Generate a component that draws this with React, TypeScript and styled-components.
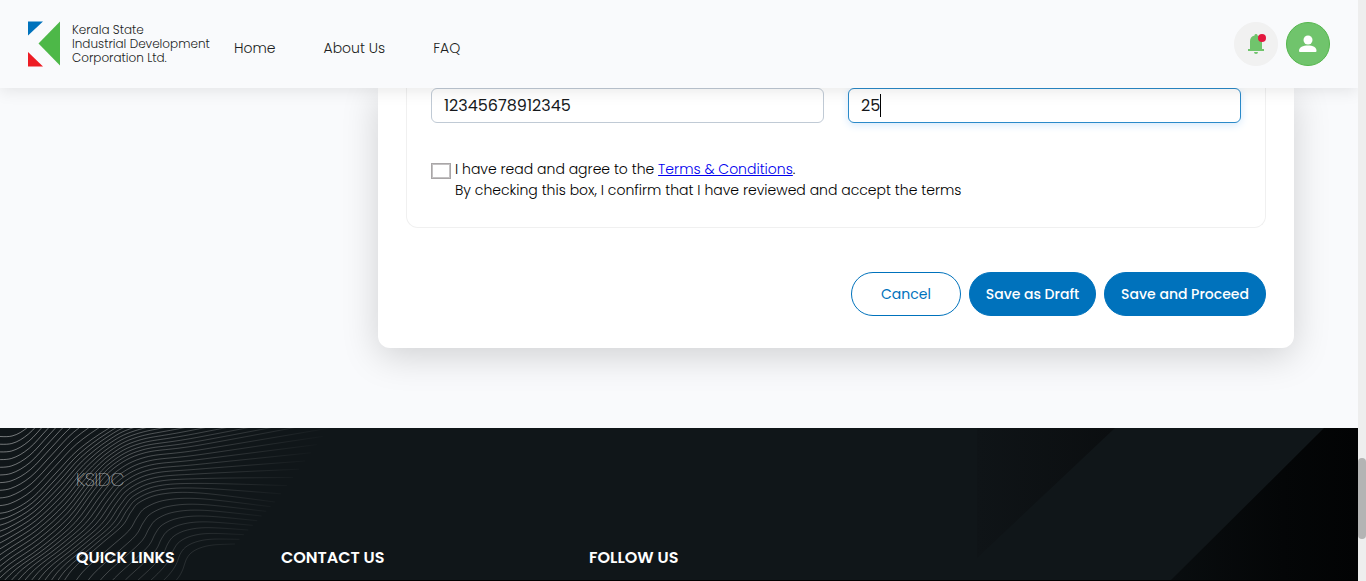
import React from "react";
import styled, { createGlobalStyle } from "styled-components";

const GlobalStyle = createGlobalStyle`
  *, *::before, *::after { box-sizing: border-box; }
  body {
    margin: 0;
    background: #f9fafc;
    color: #212529;
    font-family: Poppins, Inter, "Open Sans", sans-serif;
    font-size: 14px;
    line-height: 21px;
  }
  button, input { font: inherit; }
`;

const Shell = styled.div`
  display: grid;
  grid-template-columns: minmax(0, 1fr) 8px;
  min-height: 100vh;
`;

const Page = styled.div`
  display: flex;
  flex-direction: column;
`;

const ScrollRail = styled.div`
  position: relative;
  z-index: 3;
  background: #eeeeee;
  padding-top: 458px;
`;

const ScrollThumb = styled.div`
  height: 81px;
  border-radius: 4px;
  background: #b4b4b4;
`;

const Header = styled.header`
  position: relative;
  z-index: 2;
  display: flex;
  align-items: center;
  height: 88px;
  padding: 0 28px;
  background: #f9fafc;
  box-shadow: 0 2px 16px rgba(0, 0, 0, 0.1);
`;

const Brand = styled.a`
  display: flex;
  align-items: center;
  gap: 12px;
  width: 206px;
  color: #1c1e24;
  font-size: 12px;
  font-weight: 300;
  line-height: 14px;
  text-decoration: none;
  white-space: nowrap;
`;

const Nav = styled.nav`
  display: flex;
  flex: 1;
  gap: 48px;
  padding-top: 8px;
`;

const NavLink = styled.a`
  color: #1c1e22;
  font-weight: 300;
  text-decoration: none;
`;

const Actions = styled.div`
  display: flex;
  gap: 8px;
`;

const RoundButton = styled.button<{ $filled?: boolean }>`
  position: relative;
  display: grid;
  place-items: center;
  width: 44px;
  height: 44px;
  padding: 0;
  border: 1px solid ${(p) => (p.$filled ? "#54b64c" : "#f1f1f1")};
  border-radius: 50%;
  background: ${(p) => (p.$filled ? "#70c46c" : "#f1f1f1")};
`;

const AlertDot = styled.span`
  position: absolute;
  top: 11px;
  right: 11px;
  width: 8px;
  height: 8px;
  border-radius: 50%;
  background: #e3173e;
`;

const Main = styled.main`
  padding: 0 64px 80px 378px;
`;

const Card = styled.form`
  padding: 0 28px 32px;
  border-radius: 0 0 12px 12px;
  background: #ffffff;
  box-shadow: 0 8px 36px rgba(0, 0, 0, 0.17);
`;

const Section = styled.section`
  padding: 0 24px 26px;
  border: 1px solid #f0f0f0;
  border-top: 0;
  border-radius: 0 0 12px 12px;
`;

const Fields = styled.div`
  display: grid;
  grid-template-columns: 1fr 1fr;
  gap: 24px;
`;

const Field = styled.div`
  position: relative;
`;

const TextInput = styled.input<{ $active?: boolean }>`
  display: block;
  width: 100%;
  height: 35px;
  padding: 0 12px;
  border: 1px solid ${(p) => (p.$active ? "#2a8ac9" : "#c0cad5")};
  border-radius: 6px;
  outline: none;
  background: #ffffff;
  box-shadow: ${(p) => (p.$active ? "0 2px 8px #d4e8fb" : "none")};
  color: #16191c;
  font-size: 16px;
`;

const Caret = styled.span`
  position: absolute;
  top: 6px;
  left: 32px;
  width: 1px;
  height: 23px;
  background: #000000;
`;

const Agreement = styled.div`
  display: flex;
  align-items: flex-start;
  gap: 4px;
  padding-top: 36px;
  color: #000000;
  font-weight: 300;
`;

const CheckBox = styled.input`
  appearance: none;
  flex: none;
  width: 20px;
  height: 16px;
  margin: 4px 0 0;
  border: 1px solid #a9a6a7;
  background: #ffffff;
  box-shadow: inset 0 0 0 1px #c4c2c3;
`;

const TermsLink = styled.a`
  color: #0000ee;
`;

const ButtonRow = styled.div`
  display: flex;
  justify-content: flex-end;
  gap: 8px;
  padding-top: 44px;
`;

const PillButton = styled.button<{ $width: number; $outline?: boolean }>`
  width: ${(p) => p.$width}px;
  height: 44px;
  padding: 0;
  border: 1px solid #0072bc;
  border-radius: 22px;
  background: ${(p) => (p.$outline ? "#ffffff" : "#0072bc")};
  color: ${(p) => (p.$outline ? "#0072bc" : "#ffffff")};
  font-weight: ${(p) => (p.$outline ? 400 : 500)};
  white-space: nowrap;
`;

const Footer = styled.footer`
  position: relative;
  flex: 1;
  overflow: hidden;
  padding: 40px 76px 10px;
  border-bottom: 1px solid #000000;
  background: #101619;
  color: #ffffff;
`;

const Backdrop = styled.svg<{ $side: "left" | "right" }>`
  position: absolute;
  top: 0;
  ${(p) => p.$side}: 0;
`;

const FooterContent = styled.div`
  position: relative;
`;

const FooterBrand = styled.div`
  font-size: 18px;
  font-weight: 200;
  line-height: 24px;
`;

const FooterColumns = styled.div`
  display: grid;
  grid-template-columns: 205px 308px 1fr;
  padding-top: 54px;
`;

const FooterHeading = styled.h2`
  margin: 0;
  font-size: 16px;
  font-weight: 600;
  line-height: 24px;
`;

type Point = [number, number];

const keyWaves: { at: number; points: Point[] }[] = [
  { at: 0, points: [[-8, 8], [12, 8], [28, -1], [44, -18], [64, -38], [90, -54], [120, -66], [160, -78], [340, -130]] },
  { at: 10, points: [[-8, 86], [10, 83], [32, 70], [56, 45], [78, 22], [106, 2], [130, -10], [180, -24], [340, -60]] },
  { at: 21, points: [[-10, 160], [10, 141], [40, 120], [70, 94], [94, 62], [114, 40], [144, 25], [200, 17], [335, -8]] },
  { at: 31, points: [[54, 170], [72, 142], [100, 117], [122, 98], [131, 84], [140, 74], [162, 66], [200, 65], [275, 74]] },
  { at: 40, points: [[146, 176], [168, 160], [178, 150], [183, 141], [186, 132], [191, 125], [200, 120], [213, 117], [235, 116]] },
];

function waveAt(i: number): Point[] {
  let k = 0;
  while (k < keyWaves.length - 2 && i > keyWaves[k + 1].at) k += 1;
  const a = keyWaves[k];
  const b = keyWaves[k + 1];
  const t = (i - a.at) / (b.at - a.at);
  return a.points.map(([x, y], n): Point => [x + (b.points[n][0] - x) * t, y + (b.points[n][1] - y) * t]);
}

function smoothPath(p: Point[]): string {
  let d = `M${p[0][0]} ${p[0][1]}`;
  for (let i = 0; i < p.length - 1; i += 1) {
    const before = p[Math.max(i - 1, 0)];
    const from = p[i];
    const to = p[i + 1];
    const after = p[Math.min(i + 2, p.length - 1)];
    d += `C${from[0] + (to[0] - before[0]) / 6} ${from[1] + (to[1] - before[1]) / 6} ${to[0] - (after[0] - from[0]) / 6} ${to[1] - (after[1] - from[1]) / 6} ${to[0]} ${to[1]}`;
  }
  return d;
}

const waves = Array.from({ length: 41 }, (_, i) => smoothPath(waveAt(i)));

const Logo = () => (
  <svg width="32" height="46" viewBox="0 0 32 46" aria-hidden="true">
    <path d="M0 0.500H15L0 14.500Z" fill="#0072bc" />
    <path d="M32 0.500V44.500L10.500 22.500Z" fill="#4db848" />
    <path d="M0 31L15 45.500H0Z" fill="#ed1c24" />
  </svg>
);

const Bell = () => (
  <svg width="16" height="20" viewBox="0 0 16 20" fill="#70c46c" aria-hidden="true">
    <path d="M8 0a1.500 1.500 0 0 1 1.500 1.600A6 6 0 0 1 14 7.500V15h2v2H0v-2h2V7.500A6 6 0 0 1 6.500 1.600 1.500 1.500 0 0 1 8 0ZM6 18h4a2 2 0 0 1-4 0Z" />
  </svg>
);

const Person = () => (
  <svg width="18" height="18" viewBox="0 0 18 18" fill="#ffffff" aria-hidden="true">
    <circle cx="9" cy="5" r="4.500" />
    <path d="M1 17a1 1 0 0 1-1-1c0-4 4-5.500 9-5.500s8.500 1.500 8.500 5.500a1 1 0 0 1-1 1Z" />
  </svg>
);

export default function App() {
  return (
    <>
      <GlobalStyle />
      <Shell>
        <Page>
          <Header>
            <Brand href="#">
              <Logo />
              <span>
                Kerala State
                <br />
                Industrial Development
                <br />
                Corporation Ltd.
              </span>
            </Brand>
            <Nav>
              <NavLink href="#">Home</NavLink>
              <NavLink href="#">About Us</NavLink>
              <NavLink href="#">FAQ</NavLink>
            </Nav>
            <Actions>
              <RoundButton type="button" aria-label="Notifications">
                <Bell />
                <AlertDot />
              </RoundButton>
              <RoundButton type="button" aria-label="Profile" $filled>
                <Person />
              </RoundButton>
            </Actions>
          </Header>
          <Main>
            <Card>
              <Section>
                <Fields>
                  <Field>
                    <TextInput aria-label="Account number" defaultValue="12345678912345" />
                  </Field>
                  <Field>
                    <TextInput aria-label="Amount" defaultValue="25" $active />
                    <Caret />
                  </Field>
                </Fields>
                <Agreement>
                  <CheckBox type="checkbox" id="terms" />
                  <label htmlFor="terms">
                    I have read and agree to the <TermsLink href="#">Terms &amp; Conditions</TermsLink>.
                    <br />
                    By checking this box, I confirm that I have reviewed and accept the terms
                  </label>
                </Agreement>
              </Section>
              <ButtonRow>
                <PillButton type="button" $width={110} $outline>Cancel</PillButton>
                <PillButton type="button" $width={127}>Save as Draft</PillButton>
                <PillButton type="submit" $width={162}>Save and Proceed</PillButton>
              </ButtonRow>
            </Card>
          </Main>
          <Footer>
            <Backdrop $side="left" width="350" height="153" aria-hidden="true">
              <defs>
                <linearGradient id="waveFade" gradientUnits="userSpaceOnUse" x1="0" y1="0" x2="246" y2="148">
                  <stop offset="0" stopColor="#ffffff" stopOpacity="0.44" />
                  <stop offset="0.5" stopColor="#ffffff" stopOpacity="0.25" />
                  <stop offset="1" stopColor="#ffffff" stopOpacity="0" />
                </linearGradient>
              </defs>
              <g fill="none" stroke="url(#waveFade)" strokeWidth="1">
                {waves.map((d, i) => <path key={i} d={d} />)}
              </g>
            </Backdrop>
            <Backdrop $side="right" width="381" height="153" aria-hidden="true">
              <defs>
                <linearGradient id="shadeLeft">
                  <stop offset="0" stopColor="#0f1417" />
                  <stop offset="1" stopColor="#0b0e10" />
                </linearGradient>
                <linearGradient id="shadeRight">
                  <stop offset="0" stopColor="#090d0f" />
                  <stop offset="0.6" stopColor="#040607" />
                  <stop offset="1" stopColor="#020304" />
                </linearGradient>
              </defs>
              <path d="M0 0H138L0 130Z" fill="url(#shadeLeft)" />
              <path d="M347 0H381V153H193Z" fill="url(#shadeRight)" />
            </Backdrop>
            <FooterContent>
              <FooterBrand>KSIDC</FooterBrand>
              <FooterColumns>
                <FooterHeading>QUICK LINKS</FooterHeading>
                <FooterHeading>CONTACT US</FooterHeading>
                <FooterHeading>FOLLOW US</FooterHeading>
              </FooterColumns>
            </FooterContent>
          </Footer>
        </Page>
        <ScrollRail aria-hidden="true">
          <ScrollThumb />
        </ScrollRail>
      </Shell>
    </>
  );
}
